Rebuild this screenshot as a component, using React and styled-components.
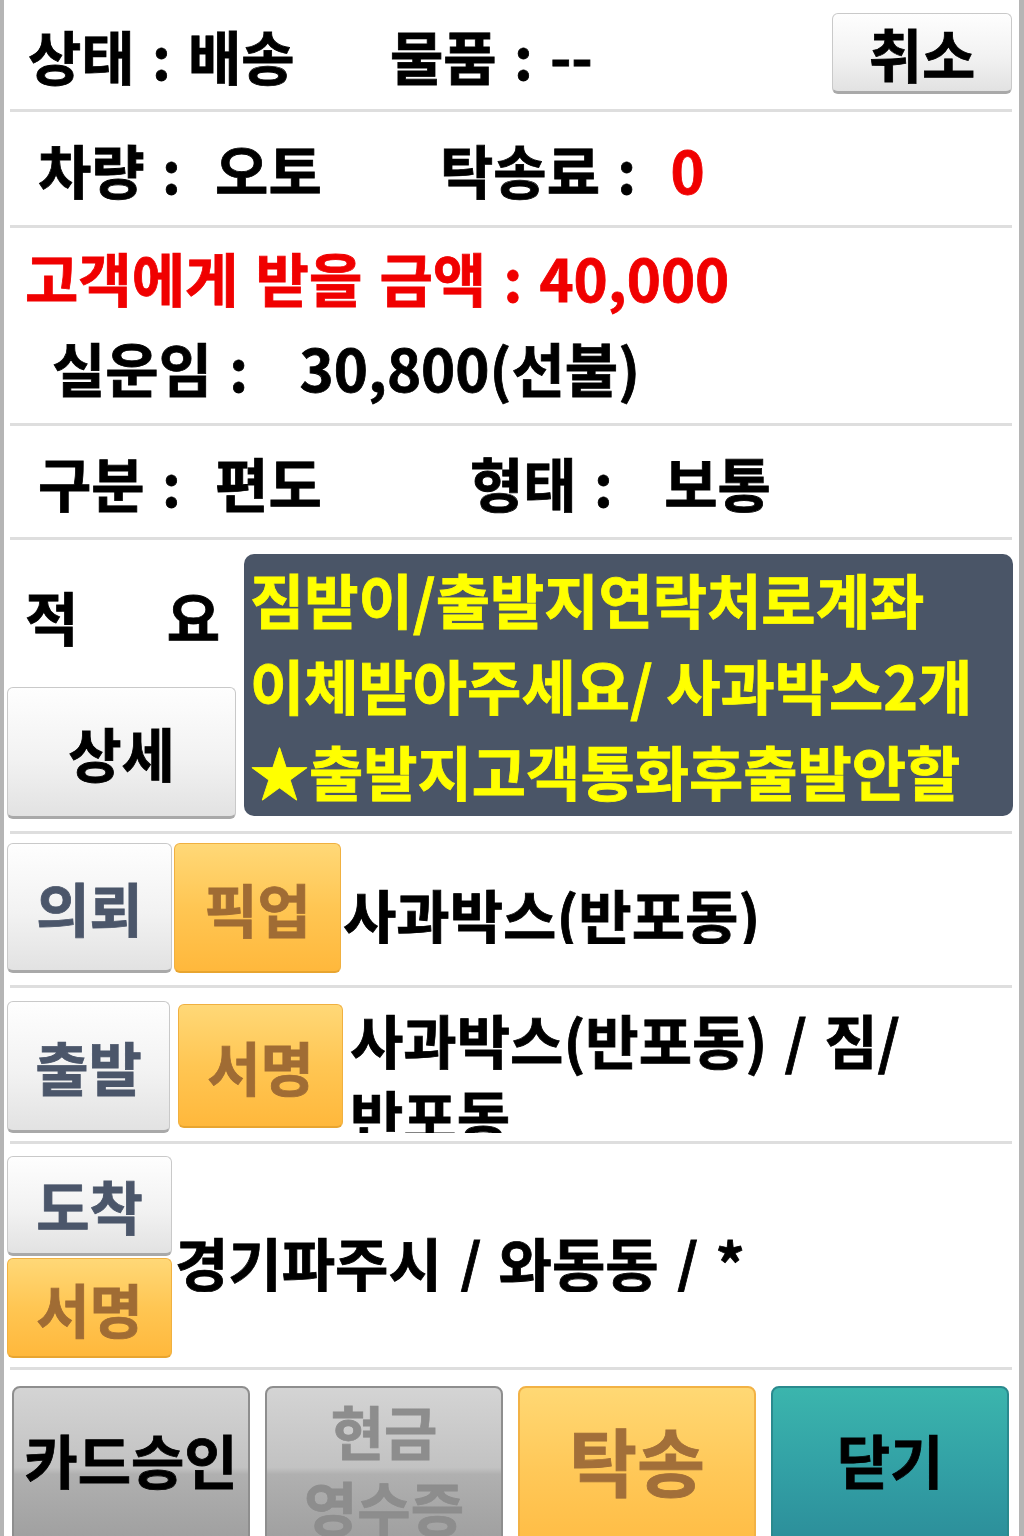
import React from "react";
import styled, { createGlobalStyle, css } from "styled-components";

const GlobalStyle = createGlobalStyle`
  html, body {
    margin: 0;
    padding: 0;
    background: #ffffff;
  }
  body {
    font-family: "Noto Sans CJK KR", "Noto Sans", sans-serif;
    color: #000;
  }
`;

const Page = styled.div`
  width: 1024px;
  height: 1536px;
  overflow: hidden;
  box-sizing: border-box;
  border-left: 4px solid #b5b5b5;
  border-right: 5px solid #b5b5b5;
  background: #fff;
  font-weight: 700;
  font-size: 58px;
  word-spacing: 4px;
  -webkit-text-stroke: 0.8px currentColor;
`;

const Divider = styled.div`
  height: 3px;
  background: #dedede;
  margin: 0 7px 0 6px;
`;

const InfoRow = styled.div`
  display: flex;
  align-items: center;
  height: ${(p) => p.$h}px;
  padding-left: ${(p) => p.$pl}px;
  box-sizing: border-box;
`;

const Field = styled.div`
  width: ${(p) => (p.$w ? `${p.$w}px` : "auto")};
  white-space: pre;
  line-height: 1;
`;

const Red = styled.span`
  color: #f00000;
`;

const Lines = styled.div`
  height: 195px;
  padding: 4px 0 0 21px;
  box-sizing: border-box;
  display: flex;
  flex-direction: column;
`;

const Line = styled.div`
  height: 90px;
  display: flex;
  align-items: center;
  white-space: pre;
  color: ${(p) => p.$color || "#000"};
  padding-left: ${(p) => p.$pl || 0}px;
`;

const buttonLight = css`
  background: linear-gradient(#fefefe 0%, #f2f2f2 55%, #e2e2e2 100%);
  border: 1px solid #c9c9c9;
  border-bottom: 3px solid #a9a9a9;
`;

const buttonOrange = css`
  background: linear-gradient(#ffd877 0%, #ffc653 50%, #ffb83c 100%);
  border: 1px solid #f0b040;
  border-bottom: 2px solid #e8a530;
  color: #a06c34;
`;

const Btn = styled.button`
  font: inherit;
  word-spacing: inherit;
  box-sizing: border-box;
  width: ${(p) => p.$w}px;
  height: ${(p) => p.$h}px;
  border-radius: 6px;
  padding: 0;
  display: flex;
  align-items: center;
  justify-content: center;
  flex-shrink: 0;
  line-height: 1;
  -webkit-text-stroke: 0.8px currentColor;
  color: ${(p) => p.$color || "#000"};
  ${(p) => (p.$orange ? buttonOrange : buttonLight)}
`;

const TopRow = styled(InfoRow)`
  padding-right: 7px;
`;

const CancelBtn = styled(Btn)`
  margin-left: auto;
  margin-top: -2px;
`;

const MemoRow = styled.div`
  height: 291px;
  box-sizing: border-box;
  padding: 14px 6px 0 3px;
  display: flex;
  align-items: flex-start;
  gap: 8px;
`;

const MemoSide = styled.div`
  width: 229px;
  display: flex;
  flex-direction: column;
`;

const MemoTitle = styled.div`
  height: 133px;
  box-sizing: border-box;
  display: flex;
  justify-content: space-between;
  align-items: center;
  padding: 0 16px 10px 18px;
  line-height: 1;
`;

const MemoBox = styled.div`
  flex: 1;
  height: 262px;
  background: #4a5567;
  border-radius: 10px;
  color: #ffff00;
  overflow: hidden;
  padding: 2px 0 0 6px;
  box-sizing: border-box;
  font-size: 59px;
  word-spacing: 0;
  line-height: 86px;
  white-space: nowrap;
`;

const StepRow = styled.div`
  height: ${(p) => p.$h}px;
  box-sizing: border-box;
  padding: ${(p) => p.$pt}px 0 0 3px;
  display: flex;
  align-items: flex-start;
  gap: ${(p) => p.$gap || 0}px;
`;

const BtnStack = styled.div`
  display: flex;
  flex-direction: column;
  gap: 2px;
`;

const StepText = styled.div`
  align-self: ${(p) => p.$self || "auto"};
  height: ${(p) => (p.$h ? `${p.$h}px` : "auto")};
  line-height: ${(p) => p.$lh || 60}px;
  overflow: hidden;
  box-sizing: border-box;
  white-space: pre-wrap;
  word-break: keep-all;
  width: 620px;
`;

const BottomBar = styled.div`
  display: flex;
  gap: 15px;
  padding: 16px 0 0 8px;
`;

const variants = {
  gray: css`
    background: linear-gradient(#d4d4d4 0%, #c2c2c2 48%, #b0b0b0 52%, #9c9c9c 100%);
    border: 2px solid #8e8e8e;
    color: #000;
  `,
  grayDim: css`
    background: linear-gradient(#d4d4d4 0%, #c2c2c2 48%, #b0b0b0 52%, #9c9c9c 100%);
    border: 2px solid #8e8e8e;
    color: #8d8d8d;
  `,
  orange: css`
    background: linear-gradient(#ffd874 0%, #ffc858 50%, #ffbb42 100%);
    border: 2px solid #f2b245;
    color: #a26f39;
    font-size: 74px;
  `,
  teal: css`
    background: linear-gradient(#3bb5ad 0%, #32a0a5 50%, #2b8b98 100%);
    border: 2px solid #2a8a8e;
    color: #000;
  `,
};

const BigBtn = styled.div`
  width: 238px;
  height: 170px;
  box-sizing: border-box;
  border-radius: 8px 8px 0 0;
  display: flex;
  flex-direction: column;
  align-items: center;
  justify-content: ${(p) => (p.$stack ? "flex-start" : "center")};
  padding-top: ${(p) => (p.$stack ? 4 : 0)}px;
  padding-bottom: ${(p) => (p.$stack ? 0 : 24)}px;
  line-height: ${(p) => (p.$stack ? "76px" : 1)};
  ${(p) => variants[p.$variant]}
`;

const slate = "#4b566a";

export default function App() {
  return (
    <>
      <GlobalStyle />
      <Page>
        <TopRow $h={109} $pl={24}>
          <Field $w={362}>{"상태 : 배송"}</Field>
          <Field>{"물품 : --"}</Field>
          <CancelBtn $w={180} $h={81}>취소</CancelBtn>
        </TopRow>
        <Divider />
        <InfoRow $h={113} $pl={34}>
          <Field $w={402}>{"차량 :  오토"}</Field>
          <Field>
            {"탁송료 :  "}
            <Red>0</Red>
          </Field>
        </InfoRow>
        <Divider />
        <Lines>
          <Line $color="#f00000">{"고객에게 받을 금액 : 40,000"}</Line>
          <Line $pl={27}>{"실운임 :   30,800(선불)"}</Line>
        </Lines>
        <Divider />
        <InfoRow $h={111} $pl={34}>
          <Field $w={432}>{"구분 :  편도"}</Field>
          <Field>{"형태 :   보통"}</Field>
        </InfoRow>
        <Divider />
        <MemoRow>
          <MemoSide>
            <MemoTitle>
              <span>적</span>
              <span>요</span>
            </MemoTitle>
            <Btn $w={229} $h={132}>상세</Btn>
          </MemoSide>
          <MemoBox>
            짐받이/출발지연락처로계좌
            <br />
            이체받아주세요/ 사과박스2개
            <br />
            ★출발지고객통화후출발안할
            <br />
            것
          </MemoBox>
        </MemoRow>
        <Divider />
        <StepRow $h={151} $pt={9} $gap={2}>
          <Btn $w={165} $h={130} $color={slate}>의뢰</Btn>
          <Btn $w={167} $h={130} $orange>픽업</Btn>
          <StepText $self="center">사과박스(반포동)</StepText>
        </StepRow>
        <Divider />
        <StepRow $h={153} $pt={13} $gap={0}>
          <Btn $w={163} $h={132} $color={slate}>출발</Btn>
          <Btn $w={165} $h={124} $orange style={{ marginLeft: 8, marginTop: 3 }}>
            서명
          </Btn>
          <StepText $h={132} $lh={76} style={{ marginLeft: 7 }}>
            사과박스(반포동) / 짐/ 반포동
          </StepText>
        </StepRow>
        <Divider />
        <StepRow $h={223} $pt={12} $gap={3}>
          <BtnStack>
            <Btn $w={165} $h={100} $color={slate}>도착</Btn>
            <Btn $w={165} $h={100} $orange>서명</Btn>
          </BtnStack>
          <StepText $self="center">경기파주시 / 와동동 / *</StepText>
        </StepRow>
        <Divider />
        <BottomBar>
          <BigBtn $variant="gray">카드승인</BigBtn>
          <BigBtn $variant="grayDim" $stack>
            <span>현금</span>
            <span>영수증</span>
          </BigBtn>
          <BigBtn $variant="orange">탁송</BigBtn>
          <BigBtn $variant="teal">닫기</BigBtn>
        </BottomBar>
      </Page>
    </>
  );
}
